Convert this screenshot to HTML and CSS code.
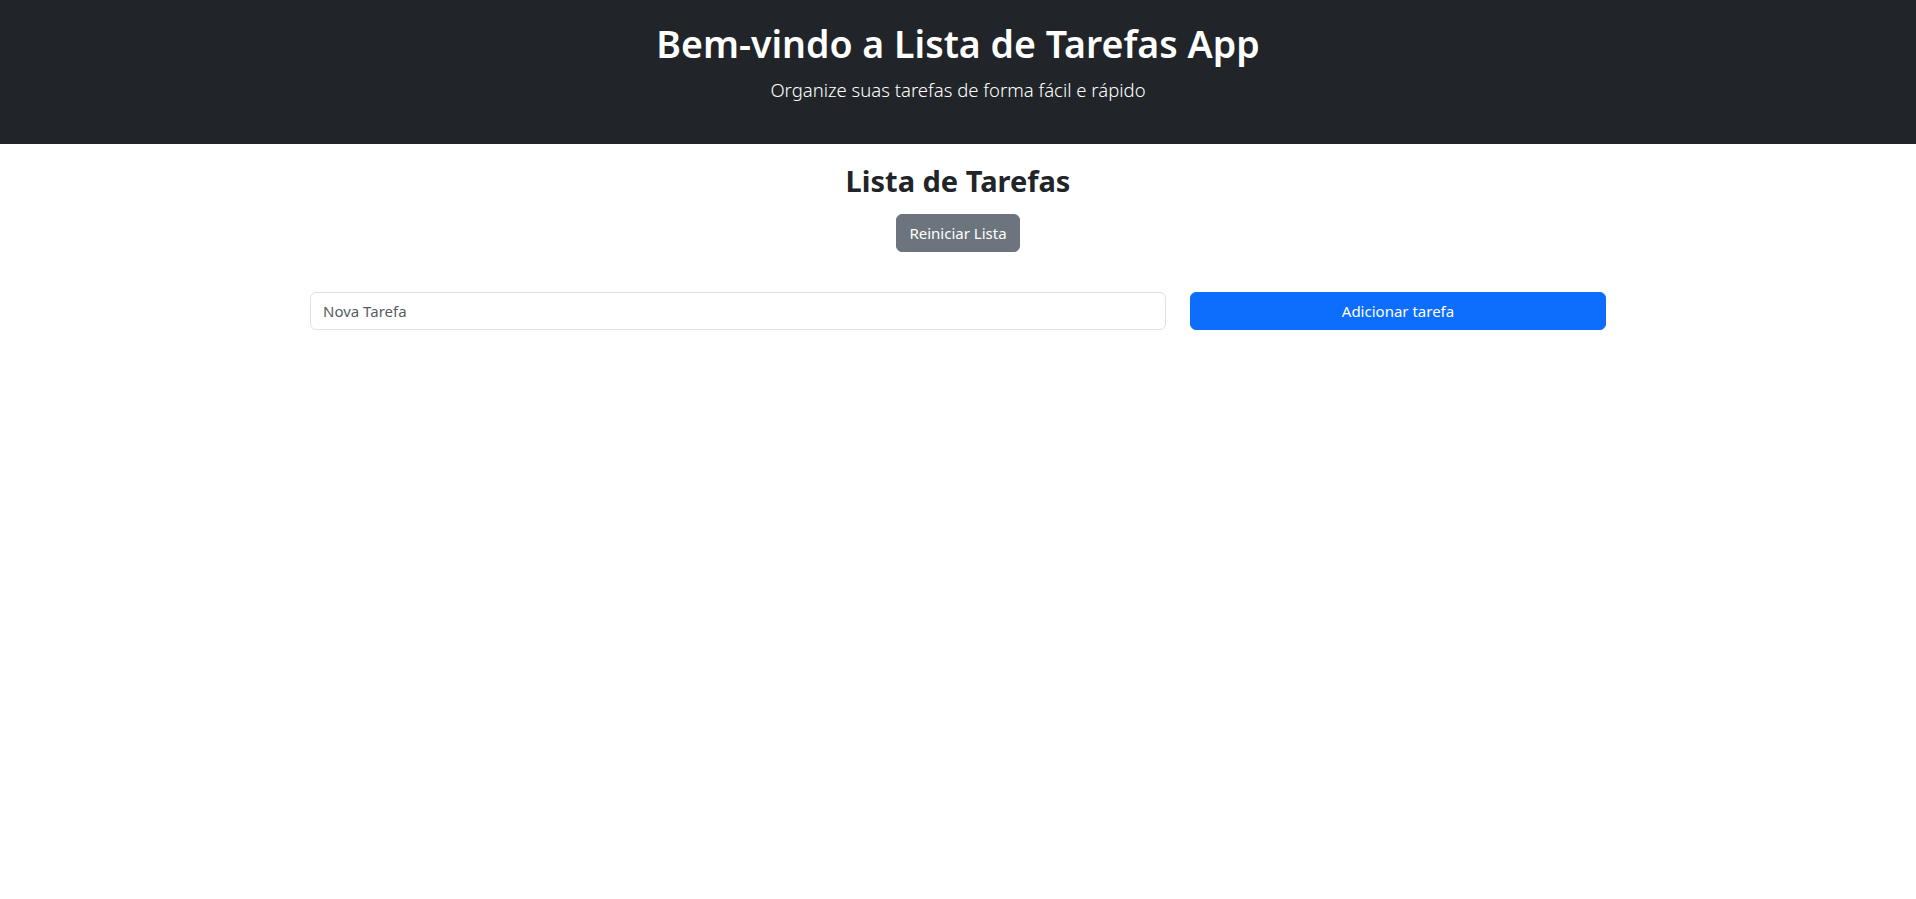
FILE: index.html
```html
<!DOCTYPE html>
<html lang="pt-BR">
<head>
<meta charset="utf-8">
<title>Lista de Tarefas</title>
<link rel="stylesheet" href="styles.css">
</head>
<body>
<header class="hero">
  <h1 class="hero-title">Bem-vindo a Lista de Tarefas App</h1>
  <p class="hero-lead">Organize suas tarefas de forma fácil e rápido</p>
</header>
<main class="container">
  <section class="list-head">
    <h2 class="list-title">Lista de Tarefas</h2>
    <button class="btn btn-secondary" type="button">Reiniciar Lista</button>
  </section>
  <form class="task-row" onsubmit="return false">
    <div class="col-8">
      <input class="form-control" type="text" placeholder="Nova Tarefa">
    </div>
    <div class="col-4">
      <button class="btn btn-primary btn-block" type="submit">Adicionar tarefa</button>
    </div>
  </form>
</main>
</body>
</html>
```
FILE: styles.css
```css
* { box-sizing: border-box; }
html, body { margin: 0; padding: 0; }
body {
  font-family: "Noto Sans", "Open Sans", sans-serif;
  color: #212529;
  background: #fff;
  font-size: 16px;
  line-height: 1.5;
}
.hero {
  background: #212529;
  color: #fff;
  height: 144px;
  text-align: center;
  padding-top: 21px;
}
.hero-title {
  margin: 0 0 10px;
  font-size: 37.5px;
  font-weight: 600;
  line-height: 1.2;
}
.hero-lead {
  margin: 0;
  font-size: 18.5px;
  font-weight: 300;
  line-height: 1.5;
}
.container {
  width: 1320px;
  margin: 0 auto;
  padding: 0 12px;
}
.list-head {
  display: flex;
  flex-direction: column;
  align-items: center;
  padding-top: 20px;
}
.list-title {
  margin: 0 0 15px;
  font-size: 29px;
  font-weight: 700;
  line-height: 1.2;
}
.btn {
  font-family: inherit;
  font-size: 15px;
  line-height: 24px;
  padding: 6px 12px;
  border: 1px solid transparent;
  border-radius: 6px;
  color: #fff;
  cursor: pointer;
}
.btn-secondary { background: #6c757d; border-color: #6c757d; }
.btn-primary { background: #0d6efd; border-color: #0d6efd; }
.btn-block { width: 100%; display: block; }
.task-row {
  display: flex;
  gap: 24px;
  margin-top: 40px;
}
.col-8 { flex: 0 0 856px; }
.col-4 { flex: 0 0 416px; }
.form-control {
  width: 100%;
  font-family: inherit;
  font-size: 15px;
  line-height: 24px;
  padding: 6px 12px;
  border: 1px solid #dee2e6;
  border-radius: 6px;
  color: #212529;
}
.form-control::placeholder { color: #595c5f; }
```
